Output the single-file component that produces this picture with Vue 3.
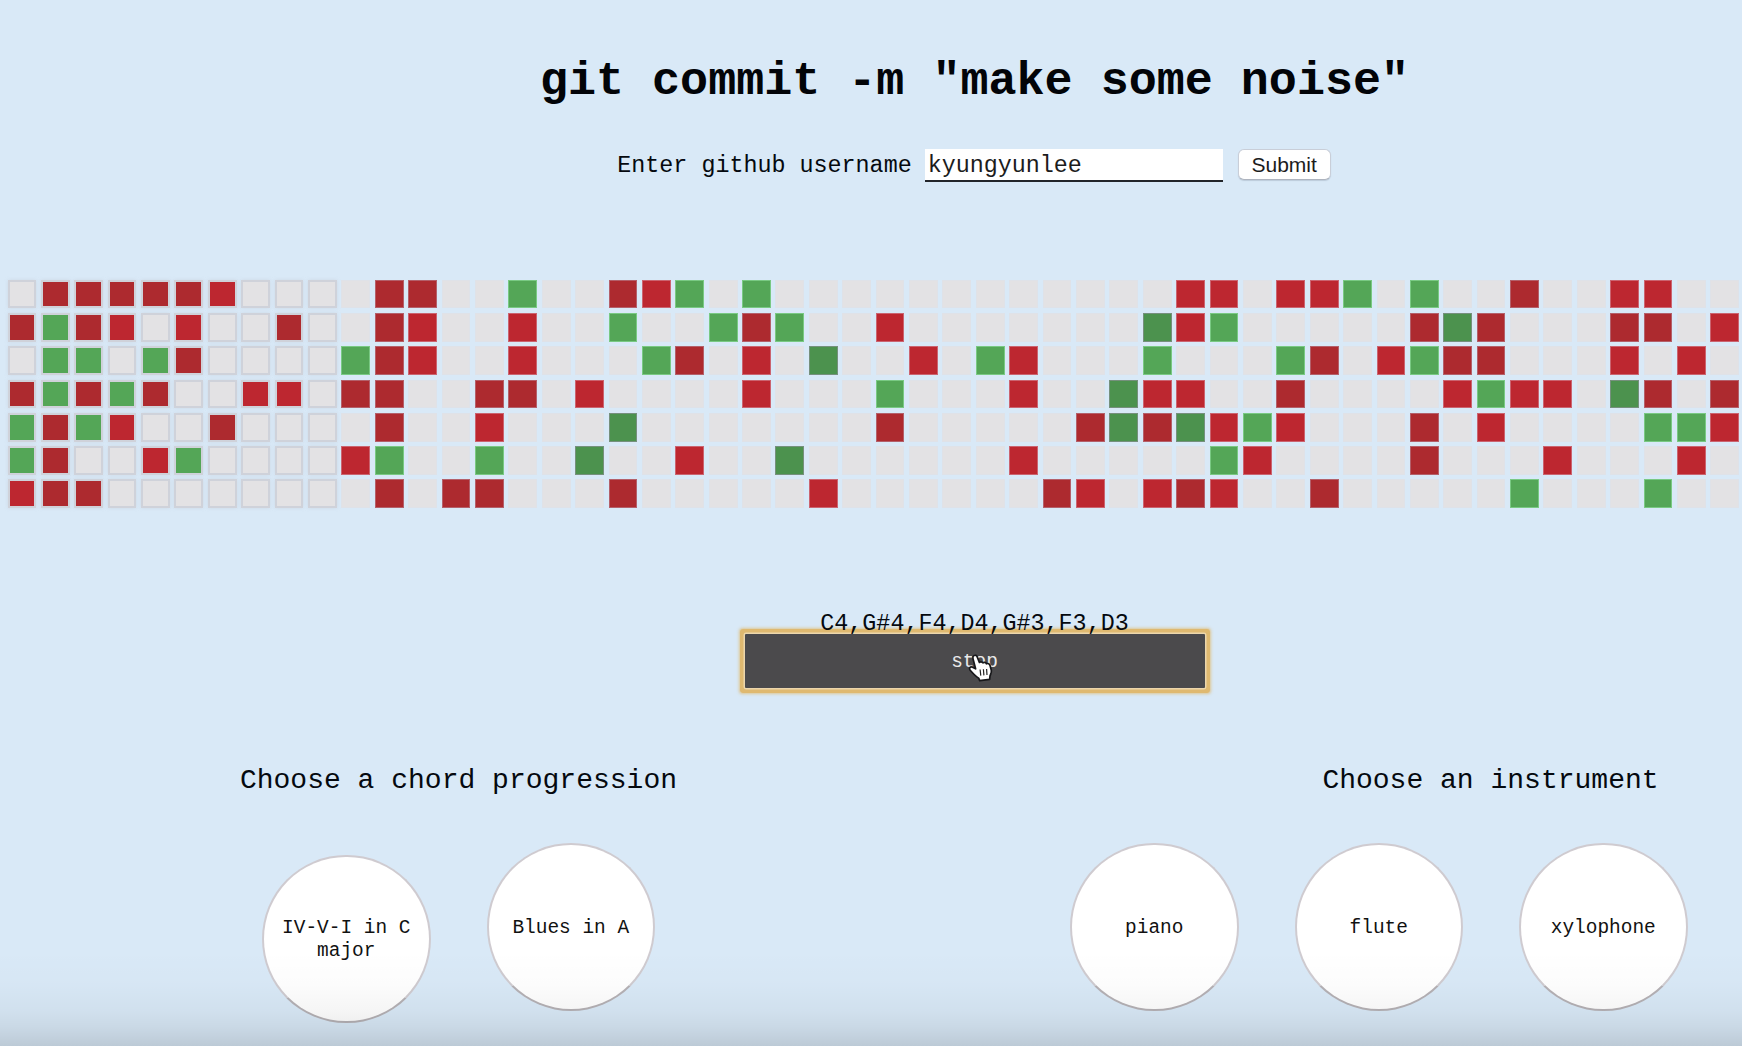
<script setup>
import { ref } from 'vue'

const username = ref('kyungyunlee')
const notes = ['C4', 'G#4', 'F4', 'D4', 'G#3', 'F3', 'D3']
const played = 10

// One string per weekday: r/R = dark/bright red, G/g = dark/bright green, . = empty
const weeks = [
  '.rrrrrR....rr..g..rRg.g............RR.RRg.g..r..RR..',
  'rgrR.R..r..rR..R..g..grg..R.......GRg.....rGr...rr.R',
  '.gg.gr....grR..R...gr.R.G..R.gR...g...gr.Rgrr...R.R.',
  'rgrgr..RR.rr..rr.R....R...g...R..GRR..r....RgRR.Gr.r',
  'grgR..r....r..R...G.......r.....rGrGRgR...r.R....ggR',
  'gr..Rg....Rg..g..G..R..G......R.....gR....r...R...R.',
  'Rrr........r.rr...r.....R......rR.RrR..r.....g...g..'
]
const kinds = { r: 'crimson', R: 'red', g: 'green', G: 'forest', '.': 'empty' }
const cells = weeks.flatMap((row) =>
  [...row].map((c, i) => ({ kind: kinds[c], played: i < played }))
)

const chords = ['IV-V-I in C major', 'Blues in A']
const instruments = ['piano', 'flute', 'xylophone']
</script>

<template>
  <div class="page">
    <main class="stage">
      <h1>git commit -m "make some noise"</h1>

      <form class="user" @submit.prevent>
        <label for="user">Enter github username</label>
        <input id="user" v-model="username" type="text" spellcheck="false" />
        <button type="submit">Submit</button>
      </form>

      <div class="grid">
        <i v-for="(c, i) in cells" :key="i" :class="['cell', c.kind, { played: c.played }]"></i>
      </div>

      <div class="notes">{{ notes.join(',') }}</div>
      <button class="play" type="button">
        stop
        <svg class="pointer" viewBox="0 0 28 30" width="28" height="30">
          <path
            d="M7 2.6C8.2 1.8 9.7 2.4 10.2 3.9L12.4 9.4C13.2 8.5 15.1 8.5 15.9 9.9C17 8.9 18.9 9.3 19.4 10.8C20.9 10 22.6 10.9 23.1 12.7L24.3 17.2C24.8 19.2 23.7 21 23 23L22.6 26.3L12.7 27.6L11.7 25.2C9 23.7 5.7 20 3.1 17.1C1.6 15.3 3.3 13.4 5.5 14.2L8.6 15.8L6 5.7C5.6 4.3 6 3.2 7 2.6Z"
            fill="#fff" stroke="#17171a" stroke-width="1.7" stroke-linejoin="round"
          />
          <path d="M13.1 16.5L13.8 22.6M16.4 16.3L16.9 22.4M19.6 16L20 22" fill="none" stroke="#222" stroke-width="1.2" />
        </svg>
      </button>

      <div class="choices">
        <section class="chords">
          <h2>Choose a chord progression</h2>
          <div class="row">
            <button v-for="c in chords" :key="c" class="disc" type="button">{{ c }}</button>
          </div>
        </section>
        <section class="instruments">
          <h2>Choose an instrument</h2>
          <div class="row">
            <button v-for="c in instruments" :key="c" class="disc" type="button">{{ c }}</button>
          </div>
        </section>
      </div>
    </main>
    <div class="fade"></div>
  </div>
</template>

<style>
body {
  background: #d9e9f7;
}
</style>

<style scoped>
.page {
  position: relative;
  width: 1742px;
  height: 1046px;
  overflow: hidden;
  background: #d9e9f7;
  color: #05090f;
  font-family: "Courier New", "Liberation Mono", monospace;
  font-size: 23.36px;
}
.stage {
  display: flex;
  flex-direction: column;
  width: 1949px;
  padding-top: 56px;
}
h1 {
  margin: 0;
  text-align: center;
  font-size: 46.72px;
  line-height: 52px;
  color: #020408;
}
.user {
  display: flex;
  justify-content: center;
  align-items: center;
  height: 33px;
  margin-top: 40.5px;
}
.user label {
  margin-right: 13px;
  line-height: 26px;
  padding-top: 2px;
}
.user input {
  box-sizing: border-box;
  width: 298px;
  height: 33px;
  margin-right: 15px;
  padding: 4px 3px 0;
  border: 0;
  border-bottom: 2px solid #22252a;
  outline: 0;
  background: #fff;
  color: #1c1c1c;
  font: inherit;
}
.user button {
  box-sizing: border-box;
  width: 93px;
  height: 31px;
  padding: 1px 0 0;
  margin: 0 1px 1px 0;
  border: 1px solid #c9ced8;
  border-bottom-color: #aeb4bf;
  border-radius: 6px;
  background: #fff;
  box-shadow: 0 1px 1px rgba(60, 70, 90, 0.18);
  color: #1c1c1c;
  font: 21px "Liberation Sans", Arial, sans-serif;
}
.grid {
  display: grid;
  grid-template-columns: repeat(52, 28.8px);
  grid-auto-rows: 28.8px;
  column-gap: 4.6px;
  row-gap: 4.5px;
  margin: 98.2px 0 0 7.5px;
}
.cell {
  box-sizing: border-box;
  border: 1px solid transparent;
}
.empty {
  background: #e3e2e4;
  border-color: #dfe2e8;
}
.crimson {
  background: #ad2a2f;
  border-color: #b4606a;
}
.red {
  background: #bd2730;
  border-color: #cb6470;
}
.green {
  background: #54a657;
  border-color: #79c983;
}
.forest {
  background: #4c924e;
  border-color: #76907d;
}
.played {
  border: 2px solid #cfd2da;
  background-clip: padding-box;
  box-shadow: 0 0 3px rgba(195, 202, 214, 0.5);
}
.notes {
  position: relative;
  z-index: 1;
  height: 23px;
  margin-top: 103.2px;
  line-height: 26px;
  text-align: center;
}
.play {
  position: relative;
  align-self: center;
  width: 460px;
  height: 54px;
  padding: 1px 0 0;
  border: 0;
  border-radius: 1px;
  background: #4b4a4c;
  box-shadow: 0 0 0 1.5px #ecd6ab, 0 0 0 5px #dfb970, 0 0 3px 6px rgba(223, 185, 112, 0.75);
  color: #e9e9e9;
  font: 19.47px "Courier New", "Liberation Mono", monospace;
}
.pointer {
  position: absolute;
  left: 222px;
  top: 19px;
}
.choices {
  display: flex;
  margin-top: 77px;
}
.chords {
  width: 393px;
  margin-left: 262px;
}
.instruments {
  width: 841px;
  margin-left: 415px;
}
h2 {
  display: flex;
  justify-content: center;
  margin: 0;
  white-space: nowrap;
  font-weight: 400;
  font-size: 28.03px;
  line-height: 32px;
}
.row {
  display: flex;
  align-items: baseline;
  gap: 56px;
  margin-top: 45.5px;
}
.disc {
  flex: none;
  box-sizing: border-box;
  width: 168.5px;
  height: 168.5px;
  padding: 3px 18px 0;
  border: 2px solid #cfcbd0;
  border-bottom-color: #b5b1b5;
  border-radius: 50%;
  background: #fff;
  color: #111;
  font: 19.47px/23.4px "Courier New", "Liberation Mono", monospace;
}
.fade {
  position: absolute;
  left: 0;
  right: 0;
  bottom: 0;
  height: 96px;
  background: linear-gradient(rgba(0, 0, 0, 0), rgba(0, 0, 0, 0.012) 35%, rgba(0, 0, 0, 0.038) 64%, rgba(0, 0, 0, 0.07) 80%, rgba(0, 0, 0, 0.135));
  z-index: 2;
}
</style>
